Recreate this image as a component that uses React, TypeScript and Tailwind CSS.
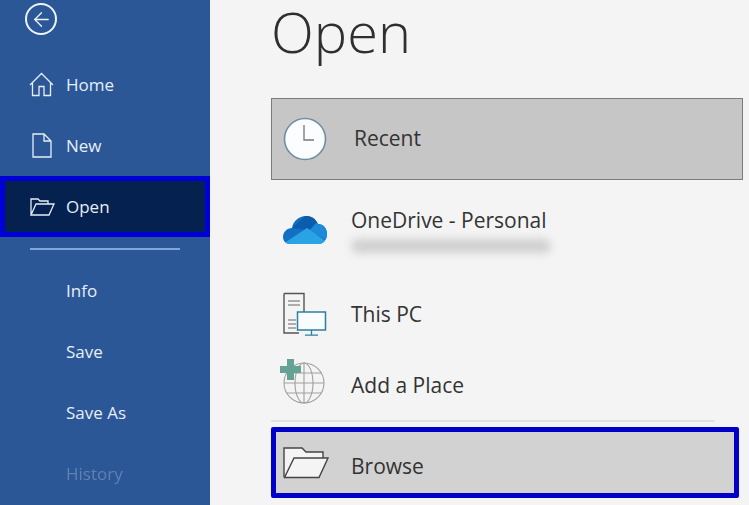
import React from "react"
import { ArrowLeft } from "lucide-react"

function HomeIcon() {
  return (
    <svg width="25" height="25" viewBox="0 0 25 25" fill="none" stroke="currentColor" strokeWidth="1.3">
      <path d="M1 13 12.5 1.5 24 13M3.5 11v12.5h6.5v-9h5v9h6.5V11" />
    </svg>
  )
}

function NewIcon() {
  return (
    <svg width="20" height="25" viewBox="0 0 20 25" fill="none" stroke="currentColor" strokeWidth="1.3">
      <path d="M1 1h11l7 7v16H1zM12 1v7h7" />
    </svg>
  )
}

function OpenIcon() {
  return (
    <svg width="25" height="18" viewBox="0 0 25 18" fill="none" stroke="currentColor" strokeWidth="1.3">
      <path d="M1 17V1h7l2 2h8v3M1 17 6 6h18l-5 11z" />
    </svg>
  )
}

const SIDE_TOP = [
  { label: "Home", icon: <HomeIcon /> },
  { label: "New", icon: <NewIcon /> },
]

const SIDE_BOTTOM = ["Info", "Save", "Save As"]

function ClockIcon() {
  return (
    <svg width="44" height="44" viewBox="0 0 44 44">
      <circle cx="22" cy="22" r="20.5" fill="#fbfdfe" stroke="#6f8ea3" strokeWidth="1.6" />
      <path d="M21 8v15h10" fill="none" stroke="#777" strokeWidth="1.3" />
    </svg>
  )
}

function CloudIcon() {
  return (
    <svg width="44" height="29" viewBox="0 0 44 29">
      <defs>
        <clipPath id="cloud">
          <path d="M7 29C3 29 0 26 0 22c0-5 4-9 9-9 1-7 7-12 14-12 5 0 9 2 12 8 5 0 9 4 9 10 0 6-4 10-8 10z" />
        </clipPath>
      </defs>
      <g clipPath="url(#cloud)">
        <rect width="44" height="29" fill="#1270c4" />
        <path d="M9 13 23 0h14v10L24 15z" fill="#0b5cad" />
        <path d="M33 8h11v17l-18-9z" fill="#1c8ad8" />
        <path d="M0 29 24 13l20 14v2z" fill="#2aa3e6" />
      </g>
    </svg>
  )
}

function PcIcon() {
  return (
    <svg width="44" height="44" viewBox="0 0 44 44">
      <path d="M1 1.5h20V20M16 41H1V1.5" fill="none" stroke="#555" strokeWidth="1.4" />
      <path d="M5 9h12M5 13h12M5 28h8M5 32h8M5 36h8" stroke="#666" strokeWidth="1.2" />
      <rect x="14.5" y="20" width="28" height="18" fill="#f7fcff" stroke="#2c7f9f" strokeWidth="1.5" />
      <path d="M28.5 38v5M22 43.2h13" stroke="#2c7f9f" strokeWidth="1.3" />
    </svg>
  )
}

function GlobeIcon() {
  return (
    <svg width="46" height="46" viewBox="0 0 46 46">
      <g fill="none" stroke="#a0a0a0" strokeWidth="1.1">
        <circle cx="25" cy="25" r="20" />
        <ellipse cx="25" cy="25" rx="9" ry="20" />
        <path d="M25 5v40M5 25h40M8 15h34M8 35h34" />
      </g>
      <path d="M8 1h7v7h7v7h-7v7H8v-7H1V8h7z" fill="#64a394" />
    </svg>
  )
}

function BrowseFolderIcon() {
  return (
    <svg width="46" height="32" viewBox="0 0 46 32">
      <path d="M1 30V1h18l4 4h17v7" fill="#f4f4f4" stroke="#444" strokeWidth="1.4" />
      <path d="M1.5 30.5 11 11h34l-9 19.5z" fill="#f4f4f4" stroke="#444" strokeWidth="1.4" />
    </svg>
  )
}

function SideItem({ label, icon, dim }: { label: string; icon?: React.ReactNode; dim?: boolean }) {
  return (
    <div className={`flex h-[61px] items-center ${dim ? "text-[#5f82b3] blur-[0.4px]" : "text-[#e6eef8]"}`}>
      <span className="flex w-[66px] justify-center pl-[17px]">{icon}</span>
      <span className="text-[17px]">{label}</span>
    </div>
  )
}

export default function App() {
  return (
    <div className="flex h-[505px] w-[749px] overflow-hidden bg-[#f4f4f4] font-['Open_Sans',sans-serif]">
      <aside className="flex w-[210px] shrink-0 flex-col bg-[#2b5797]">
        <div className="flex h-[54px] pl-[25px] pt-[3px] text-[#eef3fa]">
          <span className="flex size-[32px] items-center justify-center rounded-full border-2 border-[#eef3fa]">
            <ArrowLeft size={23} strokeWidth={1.4} />
          </span>
        </div>
        {SIDE_TOP.map((item) => (
          <SideItem key={item.label} label={item.label} icon={item.icon} />
        ))}
        <div className="h-[61px] border-[5px] border-[#0000d8] bg-[#04214f] text-[#e6eef8]">
          <div className="flex h-full items-center">
            <span className="flex w-[61px] justify-center pl-[13px]">
              <OpenIcon />
            </span>
            <span className="text-[17px]">Open</span>
          </div>
        </div>
        <div className="mx-[30px] mt-[11px] mb-[10px] h-[2px] bg-[#7ea6dc]" />
        {SIDE_BOTTOM.map((label) => (
          <SideItem key={label} label={label} />
        ))}
        <SideItem label="History" dim />
      </aside>

      <main className="min-w-0 flex-1 pl-[61px] text-[#333]">
        <h1 className="h-[98px] text-[56px] leading-[62px] font-light text-[#2f2f2f]">Open</h1>

        <div className="flex h-[82px] w-[472px] items-center border border-[#7b7b7b] bg-[#c6c6c6] pl-[11px]">
          <ClockIcon />
          <span className="ml-[27px] text-[21px]">Recent</span>
        </div>

        <div className="flex h-[98px] items-center pl-[12px]">
          <CloudIcon />
          <div className="ml-[24px]">
            <div className="text-[21px] leading-[28px]">OneDrive - Personal</div>
            <div className="mt-[5px] h-[14px] w-[200px] rounded-full bg-[#cfcfcf] blur-[4px]" />
          </div>
        </div>

        <div className="flex h-[72px] items-center pl-[12px]">
          <PcIcon />
          <span className="ml-[24px] pt-[2px] text-[21px]">This PC</span>
        </div>

        <div className="flex h-[70px] items-center pl-[8px]">
          <span className="mb-[8px]">
            <GlobeIcon />
          </span>
          <span className="ml-[26px] pt-[2px] text-[21px]">Add a Place</span>
        </div>

        <div className="h-[2px] w-[444px] bg-[#e4e0e4]" />

        <div className="mt-[5px] flex h-[71px] w-[468px] items-center rounded-[2px] border-[5px] border-[#0000c8] bg-[#d2d2d2] pl-[7px]">
          <BrowseFolderIcon />
          <span className="ml-[22px] pt-[9px] text-[21px]">Browse</span>
        </div>
      </main>
    </div>
  )
}
